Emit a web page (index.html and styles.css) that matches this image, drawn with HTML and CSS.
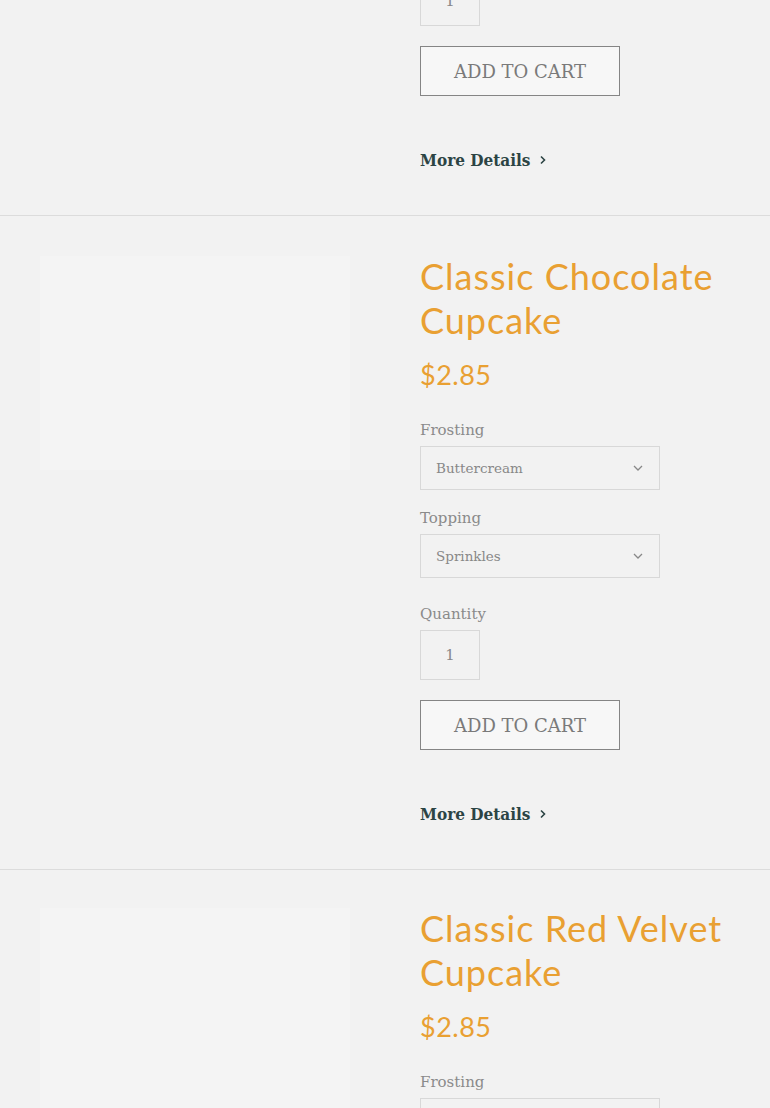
FILE: index.html
```html
<!DOCTYPE html>
<html>
<head>
<meta charset="utf-8">
<link rel="stylesheet" href="styles.css">
</head>
<body>
<div class="page">
  <section class="product top">
    <div class="media"></div>
    <div class="info">
      <div class="qty"><span>1</span></div>
      <button class="cart">ADD TO CART</button>
      <a class="more">More Details <svg width="10" height="12" viewBox="0 0 10 12"><path d="M3 2.5 L6.5 6 L3 9.5" fill="none" stroke="#2c4444" stroke-width="1.6"/></svg></a>
    </div>
  </section>

  <section class="product">
    <div class="media"><div class="img"></div></div>
    <div class="info">
      <h2 class="title">Classic Chocolate Cupcake</h2>
      <div class="price">$2.85</div>
      <label class="lbl">Frosting</label>
      <div class="select"><span>Buttercream</span><svg width="10" height="6" viewBox="0 0 10 6"><path d="M1 1 L5 5 L9 1" fill="none" stroke="#888" stroke-width="1.3"/></svg></div>
      <label class="lbl">Topping</label>
      <div class="select"><span>Sprinkles</span><svg width="10" height="6" viewBox="0 0 10 6"><path d="M1 1 L5 5 L9 1" fill="none" stroke="#888" stroke-width="1.3"/></svg></div>
      <label class="lbl qlbl">Quantity</label>
      <div class="qty"><span>1</span></div>
      <button class="cart">ADD TO CART</button>
      <a class="more">More Details <svg width="10" height="12" viewBox="0 0 10 12"><path d="M3 2.5 L6.5 6 L3 9.5" fill="none" stroke="#2c4444" stroke-width="1.6"/></svg></a>
    </div>
  </section>

  <section class="product last">
    <div class="media"><div class="img tall"></div></div>
    <div class="info">
      <h2 class="title">Classic Red Velvet Cupcake</h2>
      <div class="price">$2.85</div>
      <label class="lbl">Frosting</label>
      <div class="select"><span>Buttercream</span><svg width="10" height="6" viewBox="0 0 10 6"><path d="M1 1 L5 5 L9 1" fill="none" stroke="#888" stroke-width="1.3"/></svg></div>
    </div>
  </section>
</div>
</body>
</html>
```
FILE: styles.css
```css
html, body {
  margin: 0;
  padding: 0;
  background: #f2f2f2;
}
.page {
  height: 1108px;
  overflow: hidden;
  display: flex;
  flex-direction: column;
}
.product {
  display: grid;
  grid-template-columns: 310px 310px;
  column-gap: 70px;
  padding: 40px 40px 43px;
  border-bottom: 1px solid #dcdcdc;
  flex: none;
}
.product.top {
  margin-top: -24px;
  padding-top: 0;
}
.product.last {
  padding-top: 38px;
}
.img {
  height: 214px;
  background: #f4f4f4;
}
.img.tall {
  height: 400px;
}
.info {
  display: flex;
  flex-direction: column;
  align-items: flex-start;
}
.title {
  margin: -2px 0 0;
  font-family: "Lato", sans-serif;
  font-weight: 400;
  font-size: 36px;
  line-height: 44px;
  letter-spacing: 1px;
  color: #e9a032;
}
.price {
  margin-top: 16px;
  font-family: "Lato", sans-serif;
  font-size: 27px;
  line-height: 34px;
  letter-spacing: 0.5px;
  color: #e9a032;
}
.lbl {
  font-family: "DejaVu Serif", serif;
  font-size: 15px;
  line-height: 20px;
  color: #8a8a8a;
  margin-top: 28px;
  margin-bottom: 6px;
}
.select + .lbl {
  margin-top: 18px;
}
.qlbl {
  margin-top: 26px !important;
}
.select {
  box-sizing: border-box;
  width: 240px;
  height: 44px;
  border: 1px solid #d8d8d8;
  display: flex;
  align-items: center;
  justify-content: space-between;
  padding: 0 16px 0 15px;
  font-family: "DejaVu Serif", serif;
  font-size: 13.5px;
  color: #888;
}
.qty {
  box-sizing: border-box;
  width: 60px;
  height: 50px;
  border: 1px solid #d8d8d8;
  display: flex;
  align-items: center;
  justify-content: center;
  font-family: "DejaVu Serif", serif;
  font-size: 15px;
  color: #888;
}
.cart {
  margin-top: 20px;
  box-sizing: border-box;
  width: 200px;
  height: 50px;
  border: 1px solid #858585;
  background: #f7f7f7;
  font-family: "DejaVu Serif", serif;
  font-size: 18px;
  letter-spacing: 0;
  color: #7a7a7a;
  padding: 0;
}
.more {
  margin-top: 52px;
  font-family: "DejaVu Serif Condensed", "DejaVu Serif", serif;
  font-weight: bold;
  font-size: 17px;
  line-height: 24px;
  color: #2c4444;
  display: flex;
  align-items: center;
  gap: 8px;
}
```
